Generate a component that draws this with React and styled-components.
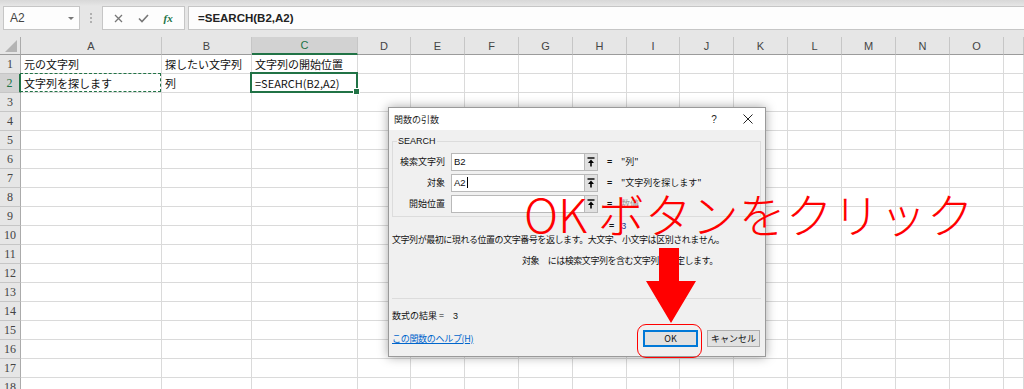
import React from 'react';
import styled, { createGlobalStyle } from 'styled-components';

const GREEN = '#217346';
const RED = '#ff0000';
const JP = '"Noto Sans CJK JP", "Liberation Sans", sans-serif';

const GlobalStyle = createGlobalStyle`
  html, body {
    margin: 0;
    padding: 0;
    width: 1024px;
    height: 389px;
    overflow: hidden;
    background: #fff;
  }
  body {
    font-family: ${JP};
  }
`;

const Page = styled.div`
  position: relative;
  width: 1024px;
  height: 389px;
  overflow: hidden;
`;

/* ---------- formula bar ---------- */

const FormulaBar = styled.div`
  height: 37px;
  box-sizing: border-box;
  display: flex;
  align-items: flex-start;
  padding: 6px 0 0 3px;
  background: linear-gradient(#d8d8d8 0, #e6e6e6 6px);
`;

const Box = styled.div`
  height: 24px;
  box-sizing: border-box;
  background: #fdfdfd;
  border: 1px solid #c6c6c6;
  display: flex;
  align-items: center;
`;

const NameBox = styled(Box)`
  width: 77px;
  padding: 0 5px 0 6px;
  justify-content: space-between;
  font-family: "Liberation Sans", sans-serif;
  font-size: 12px;
  color: #444;
`;

const Caret = styled.span`
  width: 0;
  height: 0;
  border-left: 3px solid transparent;
  border-right: 3px solid transparent;
  border-top: 3px solid #777;
`;

const Grip = styled.div`
  width: 22px;
  height: 24px;
  display: flex;
  flex-direction: column;
  align-items: center;
  justify-content: center;
  gap: 2px;
  span {
    width: 2px;
    height: 2px;
    background: #b0b0b0;
  }
`;

const FxBox = styled(Box)`
  width: 83px;
  justify-content: space-around;
  padding: 0 4px;
`;

const Fx = styled.span`
  font-family: "Liberation Serif", serif;
  font-style: italic;
  font-weight: bold;
  font-size: 11px;
  color: ${GREEN};
`;

const FormulaInput = styled(Box)`
  flex: 1;
  margin-left: 3px;
  border-right: none;
  padding-left: 9px;
  font-family: "Liberation Sans", sans-serif;
  font-weight: bold;
  font-size: 11.5px;
  color: #222;
`;

/* ---------- sheet ---------- */

const COLS = [
  ['A', 141], ['B', 90], ['C', 106], ['D', 53], ['E', 54], ['F', 54], ['G', 54],
  ['H', 54], ['I', 53], ['J', 54], ['K', 54], ['L', 54], ['M', 54], ['N', 54], ['O', 54],
];

const Sheet = styled.div`
  display: grid;
  grid-template-columns: 21px ${COLS.map(c => c[1] + 'px').join(' ')} 1fr;
  grid-template-rows: 18px;
  grid-auto-rows: 19px;
`;

const Corner = styled.div`
  position: relative;
  background: #e6e6e6;
  border-right: 1px solid #ababab;
  border-bottom: 1px solid #9b9b9b;
  &::after {
    content: '';
    position: absolute;
    right: 3px;
    bottom: 2px;
    border-left: 12px solid transparent;
    border-bottom: 12px solid #b4b4b4;
  }
`;

const ColHead = styled.div`
  box-sizing: border-box;
  background: ${p => (p.$selected ? '#d2d2d2' : '#e6e6e6')};
  border-right: 1px solid #c6c6c6;
  border-bottom: ${p => (p.$selected ? `2px solid ${GREEN}` : '1px solid #9b9b9b')};
  display: flex;
  align-items: center;
  justify-content: center;
  font-family: "Liberation Sans", sans-serif;
  font-size: 11px;
  color: ${p => (p.$selected ? GREEN : '#444')};
`;

const RowHead = styled.div`
  box-sizing: border-box;
  background: ${p => (p.$selected ? '#d2d2d2' : '#e6e6e6')};
  border-right: ${p => (p.$selected ? `2px solid ${GREEN}` : '1px solid #ababab')};
  border-bottom: 1px solid #c6c6c6;
  display: flex;
  align-items: center;
  justify-content: center;
  font-family: "Liberation Serif", serif;
  font-size: 12px;
  color: ${p => (p.$selected ? GREEN : '#444')};
`;

const Cell = styled.div`
  position: relative;
  box-sizing: border-box;
  border-right: 1px solid #dadada;
  border-bottom: 1px solid #dadada;
  display: flex;
  align-items: center;
  padding-left: 3px;
  font-size: 11px;
  color: #111;
  white-space: nowrap;

  ${p => p.$marquee && `
    &::after {
      content: '';
      position: absolute;
      inset: -1px 0 0 -1px;
      border: 1px dashed ${GREEN};
    }
  `}

  ${p => p.$active && `
    &::after {
      content: '';
      position: absolute;
      inset: -2px -1px -1px -2px;
      border: 2px solid ${GREEN};
    }
    &::before {
      content: '';
      position: absolute;
      right: -3px;
      bottom: -3px;
      width: 5px;
      height: 5px;
      background: ${GREEN};
      border: 1px solid #fff;
      z-index: 1;
    }
  `}
`;

const DATA = {
  1: { A: '元の文字列', B: '探したい文字列', C: '文字列の開始位置' },
  2: { A: '文字列を探します', B: '列', C: '=SEARCH(B2,A2)' },
};

/* ---------- dialog ---------- */

const Dialog = styled.div`
  position: absolute;
  left: 388px;
  top: 107px;
  width: 378px;
  height: 250px;
  box-sizing: border-box;
  display: flex;
  flex-direction: column;
  background: #f0f0f0;
  border: 1px solid #9a9a9a;
  box-shadow: 0 0 10px rgba(0, 0, 0, 0.35);
  font-size: 9px;
  color: #111;
`;

const TitleBar = styled.div`
  height: 22px;
  flex: none;
  display: flex;
  align-items: center;
  background: #fff;
  padding-left: 5px;
`;

const Title = styled.div`
  flex: 1;
  font-size: 9px;
  color: #222;
`;

const TitleButton = styled.div`
  width: 34px;
  height: 22px;
  display: flex;
  align-items: center;
  justify-content: center;
  font-family: "Liberation Sans", sans-serif;
  font-size: 10px;
  color: #222;
`;

const Body = styled.div`
  flex: 1;
  display: flex;
  flex-direction: column;
  padding: 5px 4px 8px 3px;
`;

const GroupBox = styled.fieldset`
  margin: 0;
  padding: 5px 0 3px 4px;
  border: 1px solid #dcdcdc;
  display: flex;
  flex-direction: column;
  gap: 2px;
`;

const Legend = styled.legend`
  padding: 0 1px;
  font-family: "Liberation Sans", sans-serif;
  font-size: 9px;
  line-height: 12px;
`;

const ArgRow = styled.div`
  display: grid;
  grid-template-columns: 46px 141px 14px 23px 1fr;
  height: 19px;
  align-items: center;
`;

const ArgLabel = styled.div`
  text-align: right;
  white-space: nowrap;
  margin-right: -2px;
`;

const ArgInput = styled.div`
  margin-left: 8px;
  height: 18px;
  box-sizing: border-box;
  background: #fff;
  border: 1px solid #b9b9b9;
  border-right: none;
  display: flex;
  align-items: center;
  padding-left: 2px;
  font-family: "Liberation Sans", sans-serif;
  font-size: 9.5px;
`;

const TextCaret = styled.span`
  display: inline-block;
  width: 1px;
  height: 11px;
  background: #000;
  margin-left: 1px;
`;

const RefButton = styled.div`
  height: 18px;
  box-sizing: border-box;
  background: #e1e1e1;
  border: 1px solid #b9b9b9;
  display: flex;
  align-items: center;
  justify-content: center;
`;

const Equals = styled.div`
  padding-left: 9px;
  font-family: "Liberation Sans", sans-serif;
  font-weight: bold;
  font-size: 9px;
`;

const ArgResult = styled.div`
  white-space: nowrap;
  color: ${p => (p.$muted ? '#9a9a9a' : '#111')};
`;

const FormulaResult = styled.div`
  margin: 3px 0 0 217px;
  height: 12px;
  display: flex;
  gap: 7px;
  align-items: center;
  font-family: "Liberation Sans", sans-serif;
  font-size: 9px;
  b { font-weight: bold; }
  span { color: #1a3a8a; }
`;

const Description = styled.div`
  margin-top: ${p => p.$top}px;
  padding-left: ${p => p.$indent || 0}px;
  height: 12px;
  line-height: 12px;
  white-space: nowrap;
  letter-spacing: -0.45px;
`;

const Separator = styled.div`
  margin-top: 31px;
  height: 1px;
  background: #dcdcdc;
`;

const ResultLine = styled.div`
  margin-top: 11px;
  height: 12px;
  line-height: 12px;
  white-space: nowrap;
  span { font-family: "Liberation Sans", sans-serif; margin-left: 9px; }
`;

const Footer = styled.div`
  margin-top: 8px;
  display: flex;
  align-items: center;
  gap: 9px;
`;

const HelpLink = styled.a`
  flex: 1;
  color: #0066cc;
  text-decoration: underline;
  letter-spacing: -0.3px;
`;

const Button = styled.div`
  width: ${p => p.$w}px;
  height: 17px;
  box-sizing: border-box;
  display: flex;
  align-items: center;
  justify-content: center;
  background: #e1e1e1;
  border: ${p => (p.$primary ? '2px solid #0078d7' : '1px solid #adadad')};
  font-size: 9px;
  color: #111;
  &:last-child { margin-right: 1px; }
`;

/* ---------- annotation ---------- */

const Callout = styled.div`
  position: absolute;
  left: 524px;
  top: 183px;
  font-family: ${JP};
  font-weight: 300;
  font-size: 47px;
  line-height: 60px;
  color: ${RED};
  white-space: nowrap;
`;

const ArrowMark = styled.svg`
  position: absolute;
  left: 645px;
  top: 247px;
`;

const Ring = styled.div`
  position: absolute;
  left: 637px;
  top: 324px;
  width: 65px;
  height: 34px;
  box-sizing: border-box;
  border: 1px solid ${RED};
  border-radius: 9px;
`;

const RefIcon = () => (
  <svg width="8" height="10" viewBox="0 0 8 10">
    <path d="M0.5 1h7" stroke="#000" strokeWidth="1.4" />
    <path d="M4 9.5V5" stroke="#000" strokeWidth="1.6" />
    <path d="M4 2.6L1 6h6z" fill="#000" />
  </svg>
);

const args = [
  { label: '検索文字列', value: 'B2', result: '"列"' },
  { label: '対象', value: 'A2', result: '"文字列を探します"', caret: true },
  { label: '開始位置', value: '', result: '数値', muted: true },
];

export default function App() {
  const rows = Array.from({ length: 18 }, (_, i) => i + 1);

  return (
    <Page>
      <GlobalStyle />
      <FormulaBar>
        <NameBox>
          A2
          <Caret />
        </NameBox>
        <Grip><span /><span /><span /></Grip>
        <FxBox>
          <svg width="9" height="9" viewBox="0 0 9 9">
            <path d="M1 1l7 7M8 1L1 8" stroke="#777" strokeWidth="1.3" />
          </svg>
          <svg width="11" height="9" viewBox="0 0 11 9">
            <path d="M1 4.5l3 3L10 1" stroke="#777" strokeWidth="1.6" fill="none" />
          </svg>
          <Fx>fx</Fx>
        </FxBox>
        <FormulaInput>=SEARCH(B2,A2)</FormulaInput>
      </FormulaBar>

      <Sheet>
        <Corner />
        {COLS.map(([c]) => (
          <ColHead key={c} $selected={c === 'C'}>{c}</ColHead>
        ))}
        <ColHead />
        {rows.map(r => (
          <React.Fragment key={r}>
            <RowHead $selected={r === 2}>{r}</RowHead>
            {COLS.map(([c]) => (
              <Cell
                key={c}
                $marquee={r === 2 && c === 'A'}
                $active={r === 2 && c === 'C'}
              >
                {DATA[r]?.[c]}
              </Cell>
            ))}
            <Cell />
          </React.Fragment>
        ))}
      </Sheet>

      <Dialog>
        <TitleBar>
          <Title>関数の引数</Title>
          <TitleButton>?</TitleButton>
          <TitleButton>
            <svg width="10" height="10" viewBox="0 0 10 10">
              <path d="M0.5 0.5l9 9M9.5 0.5l-9 9" stroke="#222" strokeWidth="1" />
            </svg>
          </TitleButton>
        </TitleBar>
        <Body>
          <GroupBox>
            <Legend>SEARCH</Legend>
            {args.map(a => (
              <ArgRow key={a.label}>
                <ArgLabel>{a.label}</ArgLabel>
                <ArgInput>
                  {a.value}
                  {a.caret && <TextCaret />}
                </ArgInput>
                <RefButton><RefIcon /></RefButton>
                <Equals>=</Equals>
                <ArgResult $muted={a.muted}>{a.result}</ArgResult>
              </ArgRow>
            ))}
          </GroupBox>
          <FormulaResult>
            <b>=</b>
            <span>3</span>
          </FormulaResult>
          <Description $top={2}>
            文字列が最初に現れる位置の文字番号を返します。大文字、小文字は区別されません。
          </Description>
          <Description $top={9} $indent={130}>
            対象　には検索文字列を含む文字列を指定します。
          </Description>
          <Separator />
          <ResultLine>
            数式の結果 =<span>3</span>
          </ResultLine>
          <Footer>
            <HelpLink>この関数のヘルプ(H)</HelpLink>
            <Button $w={55} $primary>OK</Button>
            <Button $w={53}>キャンセル</Button>
          </Footer>
        </Body>
      </Dialog>

      <Callout>OK ボタンをクリック</Callout>
      <ArrowMark width="52" height="78" viewBox="0 0 52 78">
        <polygon points="14,1 34,1 34,34 51,34 26,76 1,34 14,34" fill={RED} />
      </ArrowMark>
      <Ring />
    </Page>
  );
}
